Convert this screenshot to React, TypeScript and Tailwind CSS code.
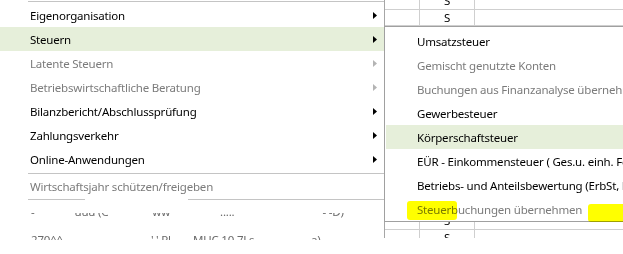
import React from 'react';

type Item = { label: string; disabled?: boolean; sub?: boolean; active?: boolean };

const mainItems: Item[] = [
  { label: 'Eigenorganisation', sub: true },
  { label: 'Steuern', sub: true, active: true },
  { label: 'Latente Steuern', sub: true, disabled: true },
  { label: 'Betriebswirtschaftliche Beratung', sub: true, disabled: true },
  { label: 'Bilanzbericht/Abschlussprüfung', sub: true },
  { label: 'Zahlungsverkehr', sub: true },
  { label: 'Online-Anwendungen', sub: true },
];

const subItems: Item[] = [
  { label: 'Umsatzsteuer' },
  { label: 'Gemischt genutzte Konten', disabled: true },
  { label: 'Buchungen aus Finanzanalyse übernehmen', disabled: true },
  { label: 'Gewerbesteuer' },
  { label: 'Körperschaftsteuer', active: true },
  { label: 'EÜR - Einkommensteuer ( Ges.u. einh. Feststellung )' },
  { label: 'Betriebs- und Anteilsbewertung (ErbSt, BewG)' },
  { label: 'Steuerbuchungen übernehmen', disabled: true },
];

function Arrow({ disabled }: { disabled?: boolean }) {
  return (
    <svg width="4" height="7" viewBox="0 0 4 7" className="ml-auto mr-[7px] shrink-0">
      <polygon points="0,0 4,3.5 0,7" fill={disabled ? '#b4b4b4' : '#000'} />
    </svg>
  );
}

function MenuRow({ item, sub }: { item: Item; sub?: boolean }) {
  return (
    <div
      className={
        'flex h-[24px] items-center whitespace-nowrap ' +
        (sub ? 'pl-[31px] ' : 'pl-[30px] ') +
        (item.active ? 'bg-[#e6efda] ' : '') +
        (item.disabled ? 'text-[#7b7b7b]' : 'text-black')
      }
    >
      <span className="pt-[2px]">{item.label}</span>
      {item.sub && <Arrow disabled={item.disabled} />}
    </div>
  );
}

// bottom/top halves of masked text
function Frag({ text, ml, top }: { text: string; ml: string; top?: boolean }) {
  return (
    <span className={'inline-block h-[5px] overflow-hidden leading-[12px] text-[#6a6a6a] ' + ml}>
      <span className={'block ' + (top ? 'mt-[-1px]' : 'mt-[-7px]')}>{text}</span>
    </span>
  );
}

function TableRow({ h, text }: { h: string; text: string }) {
  return (
    <div className={'grid grid-cols-[35px_55px_1fr] border-b border-[#cfcfcf] ' + h}>
      <div className="border-r border-[#cfcfcf]" />
      <div className="flex items-center justify-center border-r border-[#cfcfcf] leading-none">{text}</div>
      <div />
    </div>
  );
}

export default function App() {
  return (
    <div className="relative flex h-[254px] w-[623px] overflow-hidden bg-white font-['Noto_Sans',sans-serif] text-[11.5px] tracking-[-0.2px]">
      {/* Main menu */}
      <div className="w-[384px] shrink-0">
        <div className="pt-[1px] pb-[1px]">
          <div className="ml-[28px] h-px bg-[#c4c4c4]" />
        </div>
        {mainItems.map((it) => (
          <MenuRow key={it.label} item={it} />
        ))}
        <div className="pt-[2px]">
          <div className="ml-[28px] h-px bg-[#c4c4c4]" />
        </div>
        <MenuRow item={{ label: 'Wirtschaftsjahr schützen/freigeben', disabled: true }} />
        <div className="flex pt-[1px] pb-[1px]">
          <div className="ml-[28px] h-px w-[57px] bg-[#c4c4c4]" />
          <div className="ml-[103px] h-px flex-1 bg-[#c4c4c4]" />
        </div>
        <div className="flex h-[24px] items-center pt-[4px] pl-[31px] whitespace-nowrap">
          <Frag text="-" ml="" />
          <Frag text="uuu (C" ml="ml-[40px]" />
          <Frag text="ww" ml="ml-[44px]" />
          <Frag text="....." ml="ml-[50px]" />
          <Frag text="- -D)" ml="ml-[88px]" />
        </div>
        <div className="flex h-[24px] items-center pl-[31px] whitespace-nowrap">
          <Frag text="270^^" ml="" top />
          <Frag text="' ' Pl" ml="ml-[88px]" top />
          <Frag text="- MUC 10 7Ls" ml="ml-[16px]" top />
          <Frag text="...a)" ml="ml-[48px]" top />
        </div>
      </div>

      {/* Right side: table behind + submenu */}
      <div className="flex min-w-0 flex-1 flex-col">
        <div className="h-[26px] overflow-hidden border-l border-[#a6a6a6]">
          <div className="mt-[-8px]">
            <TableRow h="h-[18px]" text="S" />
            <TableRow h="h-[16px]" text="S" />
          </div>
        </div>
        <div className="border-y border-l border-[#a0a0a0] pt-[2px] pl-[1px]">
          {subItems.map((it) => (
            <MenuRow key={it.label} item={it} sub />
          ))}
        </div>
        <div className="h-[16px] overflow-hidden border-l border-[#a6a6a6]">
          <div className="mt-[-9px]">
            <TableRow h="h-[17px]" text="S" />
            <TableRow h="h-[16px]" text="S" />
          </div>
        </div>
      </div>

      {/* highlighter marks */}
      <div className="pointer-events-none absolute left-[407px] top-[201px] h-[19px] w-[50px] rounded-[3px] bg-[#ffff00] mix-blend-multiply" />
      <div className="pointer-events-none absolute left-[588px] top-[204px] h-[18px] w-[40px] rounded-[3px] bg-[#ffff00] mix-blend-multiply" />
    </div>
  );
}
